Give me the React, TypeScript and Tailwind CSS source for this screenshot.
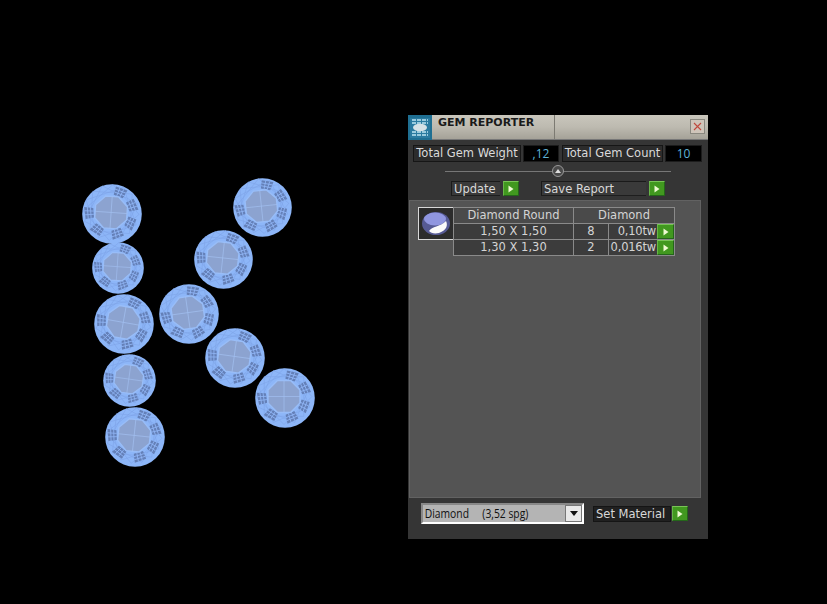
import React from "react";

const font = { fontFamily: '"DejaVu Sans", sans-serif' };

const gems = [
  { cx: 112, cy: 214, r: 30, rot: 4 },
  { cx: 118, cy: 268, r: 26, rot: 4 },
  { cx: 124, cy: 324, r: 30, rot: 10 },
  { cx: 129, cy: 380, r: 26.5, rot: 8 },
  { cx: 135, cy: 437, r: 30, rot: 6 },
  { cx: 189, cy: 314, r: 30, rot: -8 },
  { cx: 223, cy: 259, r: 29.5, rot: 6 },
  { cx: 262, cy: 207, r: 29.5, rot: -6 },
  { cx: 235, cy: 358, r: 30, rot: 8 },
  { cx: 285, cy: 398, r: 30, rot: 0 },
];

const patches = [20, 68, 115, 160, 215, 265];
const rim = Array.from({ length: 16 }, (_, i) => {
  const a = (i * Math.PI) / 8;
  return [28 * Math.cos(a), 28 * Math.sin(a)];
});

// one round stone, wireframe look
function Gem({ cx, cy, r, rot }: { cx: number; cy: number; r: number; rot: number }) {
  const octagon = "-6.5,-16 6.5,-16 16,-6.5 16,6.5 6.5,16 -6.5,16 -16,6.5 -16,-6.5";
  const chords = rim
    .map(([x, y], i) => {
      const [x2, y2] = rim[(i + 4) % 16];
      return `M${x.toFixed(1)} ${y.toFixed(1)}L${x2.toFixed(1)} ${y2.toFixed(1)}`;
    })
    .join("");
  return (
    <svg
      className="absolute"
      width={r * 2}
      height={r * 2}
      viewBox="-30 -30 60 60"
      style={{ left: cx - r, top: cy - r }}
    >
      <circle r="29.8" fill="#8db6f8" />
      <g transform={`rotate(${rot}) translate(-1 -1.5)`}>
        <path d={chords} stroke="#7ea4e8" strokeWidth="0.6" fill="none" />
        {patches.map((a) => (
          <g key={a} transform={`rotate(${a}) translate(0 -22) scale(1.2)`}>
            <path d="M-5 -3 L5 -4 L4 3.5 L-4 4 Z" fill="#6480b8" />
            <path d="M-5 -0.8 L5 -1.4 M-4.4 1.6 L4.4 1.2 M-1.6 -3.4 L-1.3 4 M1.8 -3.6 L1.4 3.8" stroke="#8fb4f4" strokeWidth="0.7" fill="none" />
          </g>
        ))}
        <polygon points={octagon} fill="#8ca3d0" stroke="#98bdf8" strokeWidth="1.4" />
        <path d="M0 -16 L0 16 M-16 0 L16 0" stroke="#a2bff0" strokeWidth="0.7" />
      </g>
    </svg>
  );
}

function GreenArrow({ className = "w-4 h-[15px]" }: { className?: string }) {
  return (
    <div className={`${className} shrink-0 flex items-center justify-center border-t border-l border-t-[#78c456] border-l-[#68b548] border-b border-r border-b-[#24661a] border-r-[#24661a] bg-[#41981f]`}>
      <svg width="6" height="8" viewBox="0 0 6 8">
        <path d="M0.5 0.5 L5.5 4 L0.5 7.5 Z" fill="#eefad2" />
      </svg>
    </div>
  );
}

function Stat({ label, value, labelW, valueW }: { label: string; value: string; labelW: string; valueW: string }) {
  return (
    <div className="flex h-[17px] gap-[2px]">
      <div className={`${labelW} flex items-center justify-center bg-[#2c2c2c] border border-[#161616] text-[11.5px] text-[#dadada] whitespace-nowrap`}>
        {label}
      </div>
      <div className={`${valueW} flex items-center justify-center bg-black border border-[#1c1c1c] text-[12px] text-[#5fb4d8]`} style={{ fontFamily: '"Open Sans", sans-serif' }}>
        {value}
      </div>
    </div>
  );
}

function ActionButton({ label, width }: { label: string; width: string }) {
  return (
    <div className="flex items-center gap-[3px]">
      <div className={`${width} h-[15px] flex items-center pl-[2px] pt-[2px] bg-[#3a3a3a] border-t border-l border-[#1a1a1a] border-b border-b-[#1e1e1e] text-[11.5px] text-[#d8d8d8] whitespace-nowrap`}>
        {label}
      </div>
      <GreenArrow />
    </div>
  );
}

const rows = [
  { size: "1,50 X 1,50", count: "8", weight: "0,10tw" },
  { size: "1,30 X 1,30", count: "2", weight: "0,016tw" },
];

function GemReporter() {
  return (
    <div
      className="absolute left-[408px] top-[115px] w-[300px] h-[424px] bg-[#353535] flex flex-col"
      style={font}
    >
      {/* title bar */}
      <div className="h-[25px] flex bg-gradient-to-b from-[#c9c6bc] via-[#bdbab0] to-[#a5a298] border-b border-[#777] shrink-0">
        <div className="w-6 h-[25px] bg-[#1f6f92] flex items-center justify-center shrink-0">
          <svg width="20" height="20" viewBox="0 0 20 20">
            <rect width="20" height="20" fill="#2b7ba0" />
            <path d="M2 2h16M2 5h16M2 14h16M2 17h16" stroke="#bfe6f2" strokeWidth="1.6" strokeDasharray="4 1" />
            <ellipse cx="10" cy="9.5" rx="7" ry="3.8" fill="#d6e2e6" />
          </svg>
        </div>
        <div className="w-[123px] pl-[6px] pt-px text-[11px] font-bold text-[#1a1a1a] leading-[14px] border-r border-[#7c7a72] whitespace-nowrap">
          GEM REPORTER
        </div>
        <div className="flex-1 flex justify-end items-start pt-[4px] pr-[3px]">
          <div className="w-[15px] h-[15px] flex items-center justify-center bg-[#cfc5ba] border border-[#8a887f]">
            <svg width="9" height="9" viewBox="0 0 9 9">
              <path d="M1 1 L8 8 M8 1 L1 8" stroke="#c0483c" strokeWidth="1.1" />
            </svg>
          </div>
        </div>
      </div>

      {/* totals */}
      <div className="flex gap-[3px] pl-[5px] pt-[5px]">
        <Stat label="Total Gem Weight" value=",12" labelW="w-[108px]" valueW="w-[36px]" />
        <Stat label="Total Gem Count" value="10" labelW="w-[101px]" valueW="w-[37px]" />
      </div>

      {/* divider handle */}
      <div className="relative h-[19px] mx-[37px] flex items-center">
        <div className="w-[226px] h-px bg-[#777]" />
        <div className="absolute left-[107px] top-[3px] w-3 h-3 rounded-full bg-[#4a4a4a] border border-[#999] flex items-center justify-center">
          <svg width="6" height="4" viewBox="0 0 6 4">
            <path d="M0 4 L3 0 L6 4 Z" fill="#ddd" />
          </svg>
        </div>
      </div>

      {/* actions */}
      <div className="flex pl-[43px] gap-[22px]">
        <ActionButton label="Update" width="w-[49px]" />
        <ActionButton label="Save Report" width="w-[105px]" />
      </div>

      {/* report list */}
      <div className="ml-px mr-[7px] mt-1 h-[298px] bg-[#545454] border border-[#626262] pt-[6px] pl-[8px] flex items-start shrink-0">
        <div className="w-[36px] h-[33px] bg-[#2c2c2c] border border-[#d8d8d8] flex items-center justify-center shrink-0">
          <svg width="30" height="27" viewBox="0 0 30 27">
            <ellipse cx="15" cy="13.5" rx="14" ry="11.5" fill="#565a94" />
            <ellipse cx="14" cy="9" rx="11" ry="6.5" fill="#9096e0" />
            <path d="M8 21 C11 16 19 17 25 11 C27 15 26 20 18 23 C13 24 10 23 8 21 Z" fill="#fbfbfb" />
          </svg>
        </div>
        <div className="w-[222px] -ml-px text-[11.5px] text-[#d4d4d4]">
          <div className="flex h-[17px] border border-[#8a8a8a] bg-[#4a4a4a]">
            <div className="w-[120px] flex items-center justify-center border-r border-[#8a8a8a]">Diamond Round</div>
            <div className="flex-1 flex items-center justify-center">Diamond</div>
          </div>
          {rows.map((row) => (
            <div key={row.size} className="flex h-4 border-x border-b border-[#8a8a8a] bg-[#3c3c3c]">
              <div className="w-[120px] flex items-center justify-center border-r border-[#8a8a8a]">{row.size}</div>
              <div className="w-[35px] flex items-center justify-center border-r border-[#8a8a8a]">{row.count}</div>
              <div className="flex-1 flex items-center justify-end pr-px whitespace-nowrap tracking-[-0.2px]">{row.weight}</div>
              <GreenArrow className="w-[17px] h-[15px]" />
            </div>
          ))}
        </div>
      </div>

      {/* material */}
      <div className="flex items-center pl-[13px] mt-[5px]">
        <div className="w-[163px] h-[21px] border-2 border-t-[#888] border-l-[#888] border-r-white border-b-white bg-[#b4b4b4] flex items-center justify-between shrink-0">
          <span className="pl-[2px] text-[12px] text-[#111] whitespace-pre" style={{ fontFamily: '"Open Sans", sans-serif', transform: "scaleX(0.86)", transformOrigin: "left" }}>
            {"Diamond     (3,52 spg)"}
          </span>
          <div className="w-[17px] h-[17px] bg-[#e8e8e8] border border-[#777] flex items-center justify-center">
            <svg width="8" height="5" viewBox="0 0 8 5">
              <path d="M0 0 L8 0 L4 5 Z" fill="#111" />
            </svg>
          </div>
        </div>
        <div className="ml-[9px] w-[78px] h-4 flex items-center pl-[2px] pt-[2px] bg-[#202020] border border-[#151515] text-[11.5px] text-[#d8d8d8] whitespace-nowrap">
          Set Material
        </div>
        <GreenArrow className="ml-px w-4 h-[15px]" />
      </div>
    </div>
  );
}

export default function App() {
  return (
    <div className="relative w-[827px] h-[604px] bg-black overflow-hidden">
      {gems.map((g) => (
        <Gem key={`${g.cx}-${g.cy}`} {...g} />
      ))}
      <GemReporter />
    </div>
  );
}
